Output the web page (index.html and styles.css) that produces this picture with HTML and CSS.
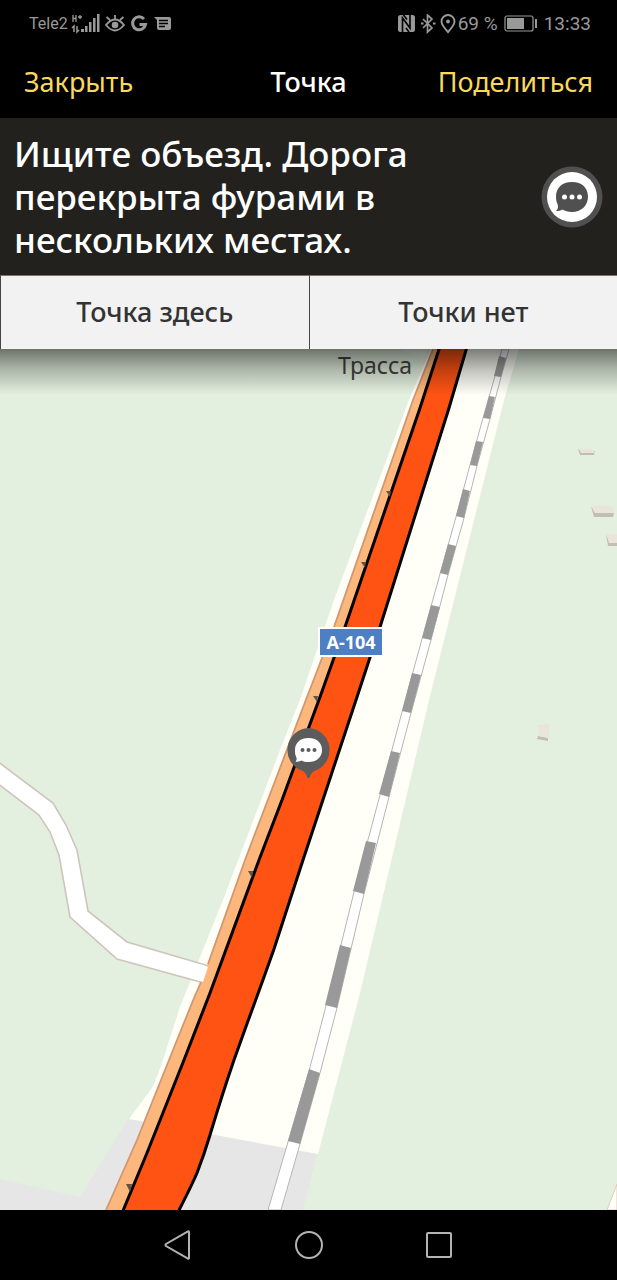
FILE: index.html
```html
<!DOCTYPE html>
<html lang="ru">
<head>
<meta charset="utf-8">
<meta name="viewport" content="width=device-width, initial-scale=1">
<title>Точка</title>
<link rel="stylesheet" href="styles.css">
</head>
<body>
<div class="screen">
  <div class="status">
    <div class="status-group">
      <span class="carrier">Tele2</span>
      <svg class="signal" width="30" height="20" viewBox="0 0 30 20" aria-hidden="true">
        <path d="M2 1v7M5 1v7M2 4.500h3M7 3h4M9 1v4" fill="none" stroke="currentColor" stroke-width="1.300"/>
        <path d="M3 18v-6l-2 2M6 12v6l2-2" fill="none" stroke="currentColor" stroke-width="1.500"/>
        <path d="M10 15h3v3h-3zM14 12h2.500v6H14zM18 8h2.500v10H18zM22 4h2.500v14H22zM26 0h2.500v18H26z" fill="currentColor"/>
      </svg>
      <svg width="20" height="20" viewBox="0 0 20 20" aria-hidden="true">
        <path d="M1 11q9-11 18 0q-9 11-18 0zM10 5V1M5 6L1.500 3M15 6l3.500-3" fill="none" stroke="currentColor" stroke-width="1.800"/>
        <circle cx="10" cy="11" r="3.300" fill="currentColor"/>
      </svg>
      <svg width="20" height="20" viewBox="0 0 20 20" aria-hidden="true">
        <path d="M15 5A6.500 6.500 0 1 0 16.500 10.500H10.500" fill="none" stroke="currentColor" stroke-width="3"/>
      </svg>
      <svg width="20" height="20" viewBox="0 0 20 20" aria-hidden="true">
        <path d="M1 3h15q2 0 2 2v9q0 2-2 2H6q-2 0-2-2V6z" fill="currentColor"/>
        <path d="M6 6.500h9M6 9.500h9M6 12.500h6" stroke="#000" stroke-width="1.300"/>
      </svg>
    </div>
    <div class="status-group status-right">
      <svg width="20" height="20" viewBox="0 0 20 20" aria-hidden="true">
        <rect x="2" y="1" width="17" height="17" rx="2.500" fill="currentColor"/>
        <path d="M6.500 18V4L14 14V1M7.500 1L11 5.500M10 14l3 4" fill="none" stroke="#000" stroke-width="1.600"/>
      </svg>
      <svg width="18" height="20" viewBox="0 0 18 20" aria-hidden="true">
        <path d="M5 5l9 9-4.500 4V1L14 5l-9 9" fill="none" stroke="currentColor" stroke-width="1.700"/>
        <path d="M3 9.500h2.500M15 9.500h2.500" stroke="currentColor" stroke-width="2"/>
      </svg>
      <svg width="18" height="20" viewBox="0 0 18 20" aria-hidden="true">
        <path d="M10 18Q3.500 11 3.500 7.500a6.500 6.500 0 0 1 13 0Q16.500 11 10 18z" fill="none" stroke="currentColor" stroke-width="1.900"/>
        <circle cx="10" cy="7.500" r="1.900" fill="currentColor"/>
      </svg>
      <span class="figures">69 %</span>
      <svg class="battery" width="34" height="18" viewBox="0 0 34 18" aria-hidden="true">
        <rect x="1" y="1" width="28" height="15" rx="2" fill="none" stroke="currentColor" stroke-width="1.200"/>
        <path d="M3 3h17v11H3zM31 4h2v9h-2z" fill="currentColor"/>
      </svg>
      <time class="figures">13:33</time>
    </div>
  </div>

  <header class="appbar">
    <button class="link start" type="button">Закрыть</button>
    <h1 class="title">Точка</h1>
    <button class="link end" type="button">Поделиться</button>
  </header>

  <section class="message">
    <p class="message-text">Ищите объезд. Дорога перекрыта фурами в нескольких местах.</p>
    <svg class="badge" width="62" height="62" viewBox="0 0 62 62" aria-hidden="true">
      <circle cx="31" cy="31" r="30.500" fill="#505050"/>
      <circle cx="31" cy="31" r="25" fill="#fff"/>
      <path d="M31 16c10 0 16 6 16 14.500S41 46 31 46c-4 0-7-1-9.500-2.500-2 1-4 1.500-6.500 1.500 2-2 2.500-4 1.500-7-1-2-1.500-4-1.500-7.500C15 22 21 16 31 16z" fill="#505050"/>
      <g fill="#fff"><circle cx="23.500" cy="31" r="2.500"/><circle cx="31" cy="31" r="2.500"/><circle cx="38.500" cy="31" r="2.500"/></g>
    </svg>
  </section>

  <div class="actions">
    <button class="action" type="button">Точка здесь</button>
    <button class="action" type="button">Точки нет</button>
  </div>

  <main class="map">
    <svg class="map-canvas" viewBox="0 349 617 861" preserveAspectRatio="xMidYMin slice" role="img" aria-label="Карта, трасса А-104">
      <rect y="349" width="617" height="861" fill="#e4f0df"/>
      <path d="M0 1179L80 1197L129 1117L240 1130L318 1152L303 1210H0z" fill="#e6e6e6"/>
      <path d="M431 349L409 400L334 600L301 697L280 750L223 900L180 1007L163 1060Q157 1078 152 1088L129 1119L318 1154L360 993L382 900L429 700L504 400L519 349z" fill="#fffff8"/>
      <path d="M400 350L425 357L427 349z" fill="#eef2e6"/>
      <path d="M617 1184L607 1210H617z" fill="#fff" stroke="#e5c9b0"/>

      <path d="M-3 761L53 803L66 825L77 850L88 911L127 942L209 966L204 983L117 959L70 917L59 855L50 832L39 815L-3 783z" fill="#fff" stroke="#cfc4bc" stroke-width="1.600"/>
      <path d="M433 349L413 400L334 627L307 697L280 768L245 860L208 963L194 998L169 1060L137 1140L106 1210H124L147 1153L184 1060L259 860L320 697L440 349z" fill="#fdb67b"/>
      <path d="M433 349L413 400L334 627L307 697L280 768L245 860L208 964M201 982L194 998L169 1060L137 1140L106 1210" fill="none" stroke="#cf9871" stroke-width="1.800"/>
      <path d="M199 964L208 967L203 982L194 979z" fill="#fff"/>
      <path class="road" d="M442 340L420 408L345 627L320 697L282 800L259 860L210 993L184 1060L147 1153L120 1218H175Q191 1187 197 1173Q204 1155 210 1135Q222 1095 234 1060L248 1021Q262 983 274 949L303 860L357 697L380 627L449 408L469 340z"/>
      <path d="M386 491h5l-1 6zM361 562h5l-1 6zM313 696h5l-1 6zM248 871h5l-1 7zM126 1184h6l-2 8z" fill="#625248"/>

      <path d="M502 349L495 376L483 418L470 465L456 517L440 574L422 639L402 712L380 795L354 892L326 1006L309 1071L288 1142L268 1210H281L300 1144L320 1073L337 1008L364 894L389 797L411 713L431 640L448 575L464 518L477 466L490 419L501 377L509 349z" fill="#fff" stroke="#b5b5b5"/>
      <path fill="#999" d="M499 356L506 358L501 377L494 376zM489 396L495 397L490 419L483 418zM476 441L483 442L477 466L470 465zM463 489L470 491L464 518L456 516zM448 544L456 546L448 575L440 573zM431 605L440 607L431 640L422 638zM412 673L421 675L411 713L402 711zM391 751L400 753L389 797L379 794zM366 841L376 843L364 894L353 891zM340 945L351 948L337 1008L325 1005zM309 1069L320 1073L300 1144L288 1141z"/>

      <path d="M578 449L581 451H595L594 455H580zM591 506L595 513H614L613 517H594zM606 534L609 542H617V546H608zM538 736L548 738V741L537 739z" fill="#c1beb4"/>
      <path d="M579 449H592L595 453H581zM592 506H611L615 513H595zM607 534H617V543H609zM538 725L549 724V738L539 736z" fill="#ebe4da"/>

      <text class="place" x="338" y="374">Трасса</text>
      <rect x="319" y="628" width="64" height="28" fill="#4c7fc3" stroke="#fff" stroke-width="2"/>
      <text class="shield" x="351" y="649" text-anchor="middle">A-104</text>

      <path d="M308.500 728a22 22 0 0 1 7 42.500Q311 772 309.500 778h-2Q306 772 301.500 770.500A22 22 0 0 1 308.500 728z" fill="#5c5c5c"/>
      <path d="M308.500 738c8 0 13.500 4.500 13.500 12s-5.500 12-13.500 12c-3 0-5-.5-7-1.500-1.500 1-3.500 1.500-6 1 1.500-1.500 1.500-3 .5-5-1-2-1-4-1-6.500C295 742.500 300.500 738 308.500 738z" fill="#fff"/>
      <g fill="#5c5c5c"><circle cx="302.500" cy="750" r="2"/><circle cx="308.500" cy="750" r="2"/><circle cx="314.500" cy="750" r="2"/></g>
    </svg>
  </main>

  <nav class="navbar" aria-label="Системная навигация">
    <button class="nav-button" type="button" aria-label="Назад">
      <svg width="32" height="32" viewBox="0 0 32 32"><path d="M27 3V29Q27 30 26 29.500L4 17Q3 16 4 15L26 2.500Q27 2 27 3z"/></svg>
    </button>
    <button class="nav-button" type="button" aria-label="Домой">
      <svg width="32" height="32" viewBox="0 0 32 32"><circle cx="16" cy="16" r="13"/></svg>
    </button>
    <button class="nav-button" type="button" aria-label="Недавние">
      <svg width="32" height="32" viewBox="0 0 32 32"><rect x="3" y="4" width="24" height="24" rx="1"/></svg>
    </button>
  </nav>
</div>
</body>
</html>
```
FILE: styles.css
```css
* {
  box-sizing: border-box;
}

body {
  margin: 0;
  background: #000;
  font-family: "Noto Sans", sans-serif;
}

button {
  margin: 0;
  padding: 0;
  border: 0;
  background: none;
  font: inherit;
}

svg {
  display: block;
}

.screen {
  display: flex;
  flex-direction: column;
  min-height: 100vh;
}

.status {
  display: flex;
  align-items: center;
  justify-content: space-between;
  height: 47px;
  padding: 0 26px 0 29px;
  color: #999;
  font-family: Roboto, sans-serif;
}

.status-group {
  display: flex;
  align-items: center;
  gap: 4px;
}

.status-right {
  gap: 2px;
}

.carrier {
  font-size: 16px;
}

.signal {
  margin-left: -1px;
}

.figures {
  font-size: 19px;
}

.battery {
  margin: 0 4px;
}

.appbar {
  display: grid;
  grid-template-columns: 1fr auto 1fr;
  align-items: center;
  height: 71px;
  padding: 0 24px 2px;
  font-size: 27px;
}

.link {
  color: #f9d860;
  cursor: pointer;
}

.start {
  justify-self: start;
}

.end {
  justify-self: end;
}

.title {
  margin: 0;
  color: #fff;
  font-size: 27px;
  font-weight: 500;
}

.message {
  display: flex;
  align-items: center;
  justify-content: space-between;
  gap: 40px;
  padding: 14px;
  background: #22211e;
}

.message-text {
  max-width: 420px;
  margin: 0;
  color: #fff;
  font-size: 35px;
  font-weight: 500;
  line-height: 43px;
}

.badge {
  flex: none;
}

.actions {
  display: grid;
  grid-template-columns: 1fr 1fr;
  height: 74px;
}

.action {
  padding-bottom: 2px;
  border-top: 1px solid #77776f;
  border-left: 1px solid #444;
  background: #f2f2f2;
  color: #333;
  font-size: 27px;
  font-weight: 500;
  cursor: pointer;
}

.map {
  display: flex;
  flex: 1;
  position: relative;
}

.map::after {
  content: "";
  position: absolute;
  inset: 0 0 auto;
  height: 46px;
  background: linear-gradient(rgba(0, 0, 0, 0.52), rgba(0, 0, 0, 0.24) 45%, transparent);
}

.map-canvas {
  width: 100%;
}

.road {
  fill: #ff5314;
  stroke: #000;
  stroke-width: 3px;
}

.place {
  fill: #40443e;
  font-size: 23px;
}

.shield {
  fill: #fff;
  font-size: 18px;
  font-weight: 700;
}

.navbar {
  display: flex;
  align-items: center;
  justify-content: center;
  gap: 99px;
  height: 70px;
}

.nav-button {
  cursor: pointer;
}

.nav-button svg {
  fill: none;
  stroke: #b3b3b3;
  stroke-width: 2px;
}
```
